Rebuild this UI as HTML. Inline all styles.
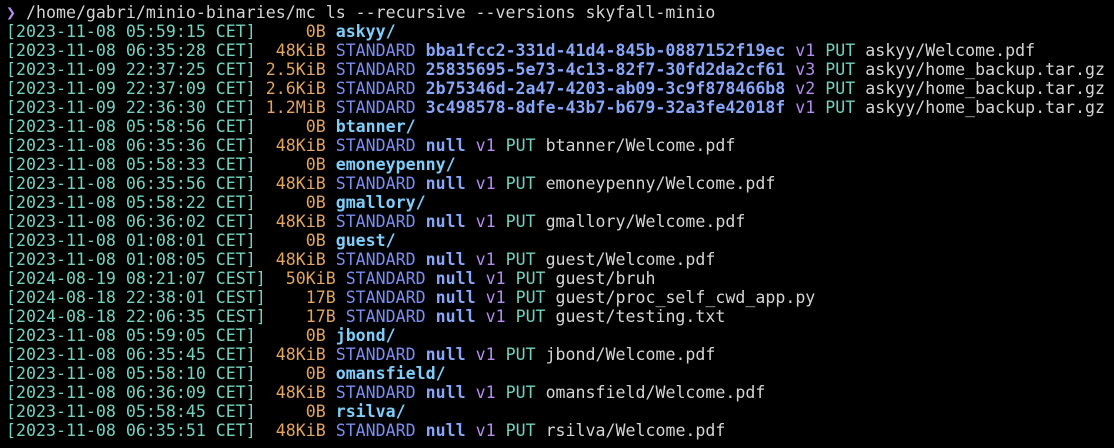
<!DOCTYPE html>
<html><head><meta charset="utf-8"><style>
html,body{margin:0;padding:0;background:#000;width:1114px;height:448px;overflow:hidden}
pre{margin:0;position:absolute;left:6px;top:3px;font-family:"DejaVu Sans Mono","Liberation Mono",monospace;font-size:16.6px;line-height:19px;color:#d4d4d4}
.t{color:#73d1bd}.s{color:#e2a45f}.c{color:#7b8ef2}.n{color:#86a6fa;font-weight:bold}.v{color:#b68cf0}.p{color:#73d1bd}.f{color:#d4d4d4}.d{color:#7fcdfb;font-weight:bold}.g{color:#b48cf0}
</style></head><body><pre><span class="g">❯</span> /home/gabri/minio-binaries/mc ls --recursive --versions skyfall-minio
<span class="t">[2023-11-08 05:59:15 CET]</span><span class="s">     0B</span> <span class="d">askyy/</span>
<span class="t">[2023-11-08 06:35:28 CET]</span><span class="s">  48KiB</span> <span class="c">STANDARD</span> <span class="n">bba1fcc2-331d-41d4-845b-0887152f19ec</span> <span class="v">v1</span> <span class="p">PUT</span> askyy/Welcome.pdf
<span class="t">[2023-11-09 22:37:25 CET]</span><span class="s"> 2.5KiB</span> <span class="c">STANDARD</span> <span class="n">25835695-5e73-4c13-82f7-30fd2da2cf61</span> <span class="v">v3</span> <span class="p">PUT</span> askyy/home_backup.tar.gz
<span class="t">[2023-11-09 22:37:09 CET]</span><span class="s"> 2.6KiB</span> <span class="c">STANDARD</span> <span class="n">2b75346d-2a47-4203-ab09-3c9f878466b8</span> <span class="v">v2</span> <span class="p">PUT</span> askyy/home_backup.tar.gz
<span class="t">[2023-11-09 22:36:30 CET]</span><span class="s"> 1.2MiB</span> <span class="c">STANDARD</span> <span class="n">3c498578-8dfe-43b7-b679-32a3fe42018f</span> <span class="v">v1</span> <span class="p">PUT</span> askyy/home_backup.tar.gz
<span class="t">[2023-11-08 05:58:56 CET]</span><span class="s">     0B</span> <span class="d">btanner/</span>
<span class="t">[2023-11-08 06:35:36 CET]</span><span class="s">  48KiB</span> <span class="c">STANDARD</span> <span class="n">null</span> <span class="v">v1</span> <span class="p">PUT</span> btanner/Welcome.pdf
<span class="t">[2023-11-08 05:58:33 CET]</span><span class="s">     0B</span> <span class="d">emoneypenny/</span>
<span class="t">[2023-11-08 06:35:56 CET]</span><span class="s">  48KiB</span> <span class="c">STANDARD</span> <span class="n">null</span> <span class="v">v1</span> <span class="p">PUT</span> emoneypenny/Welcome.pdf
<span class="t">[2023-11-08 05:58:22 CET]</span><span class="s">     0B</span> <span class="d">gmallory/</span>
<span class="t">[2023-11-08 06:36:02 CET]</span><span class="s">  48KiB</span> <span class="c">STANDARD</span> <span class="n">null</span> <span class="v">v1</span> <span class="p">PUT</span> gmallory/Welcome.pdf
<span class="t">[2023-11-08 01:08:01 CET]</span><span class="s">     0B</span> <span class="d">guest/</span>
<span class="t">[2023-11-08 01:08:05 CET]</span><span class="s">  48KiB</span> <span class="c">STANDARD</span> <span class="n">null</span> <span class="v">v1</span> <span class="p">PUT</span> guest/Welcome.pdf
<span class="t">[2024-08-19 08:21:07 CEST]</span><span class="s">  50KiB</span> <span class="c">STANDARD</span> <span class="n">null</span> <span class="v">v1</span> <span class="p">PUT</span> guest/bruh
<span class="t">[2024-08-18 22:38:01 CEST]</span><span class="s">    17B</span> <span class="c">STANDARD</span> <span class="n">null</span> <span class="v">v1</span> <span class="p">PUT</span> guest/proc_self_cwd_app.py
<span class="t">[2024-08-18 22:06:35 CEST]</span><span class="s">    17B</span> <span class="c">STANDARD</span> <span class="n">null</span> <span class="v">v1</span> <span class="p">PUT</span> guest/testing.txt
<span class="t">[2023-11-08 05:59:05 CET]</span><span class="s">     0B</span> <span class="d">jbond/</span>
<span class="t">[2023-11-08 06:35:45 CET]</span><span class="s">  48KiB</span> <span class="c">STANDARD</span> <span class="n">null</span> <span class="v">v1</span> <span class="p">PUT</span> jbond/Welcome.pdf
<span class="t">[2023-11-08 05:58:10 CET]</span><span class="s">     0B</span> <span class="d">omansfield/</span>
<span class="t">[2023-11-08 06:36:09 CET]</span><span class="s">  48KiB</span> <span class="c">STANDARD</span> <span class="n">null</span> <span class="v">v1</span> <span class="p">PUT</span> omansfield/Welcome.pdf
<span class="t">[2023-11-08 05:58:45 CET]</span><span class="s">     0B</span> <span class="d">rsilva/</span>
<span class="t">[2023-11-08 06:35:51 CET]</span><span class="s">  48KiB</span> <span class="c">STANDARD</span> <span class="n">null</span> <span class="v">v1</span> <span class="p">PUT</span> rsilva/Welcome.pdf</pre></body></html>
